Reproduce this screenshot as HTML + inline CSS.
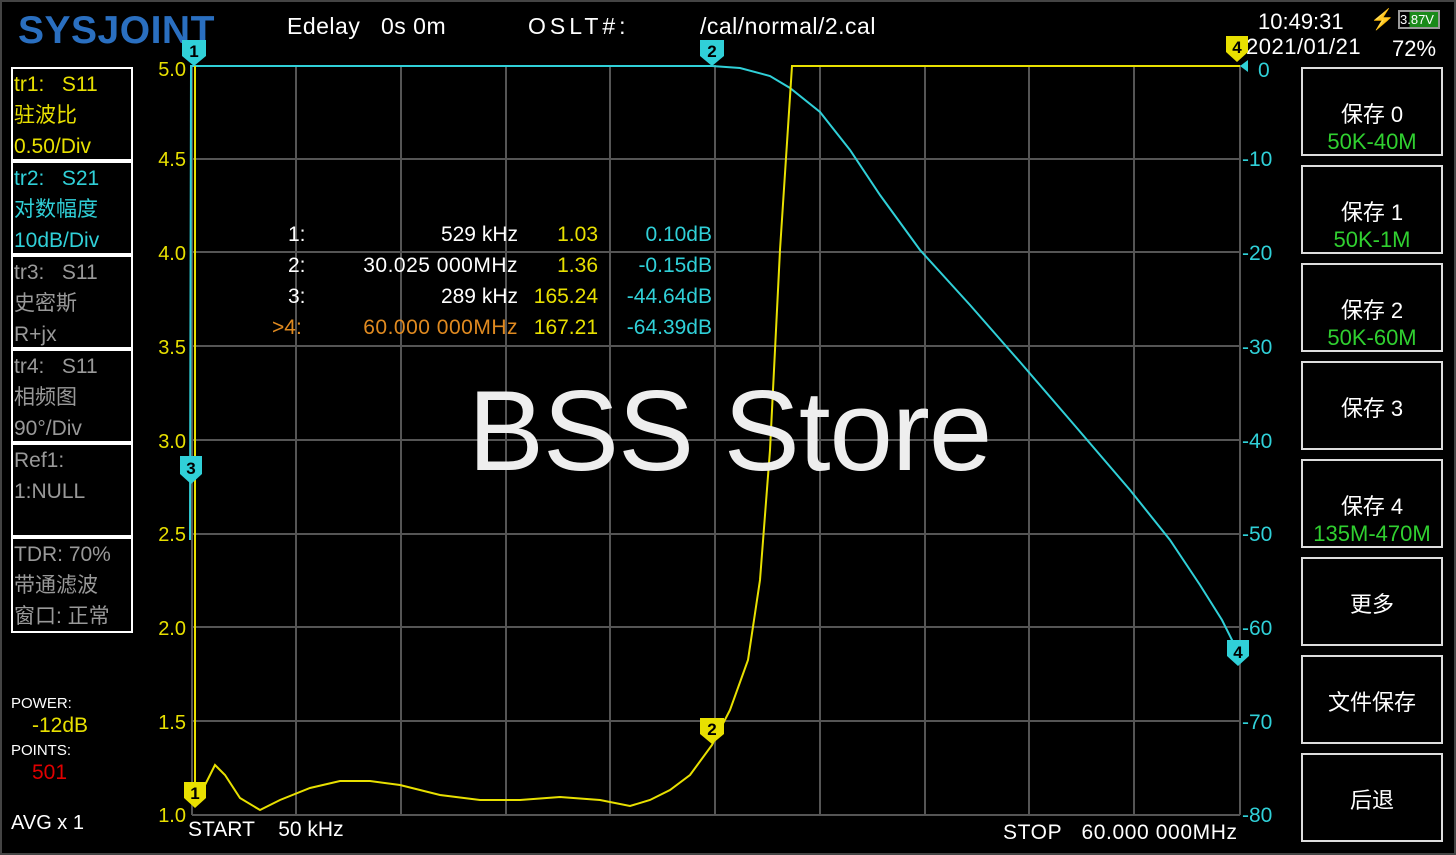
<!DOCTYPE html>
<html><head><meta charset="utf-8"><style>
body{margin:0;width:1456px;height:855px;background:#000;overflow:hidden;position:relative;font-family:"Liberation Sans","Noto Sans CJK SC",sans-serif}
.a{position:absolute;white-space:nowrap}
.box{position:absolute;left:11px;width:122px;border:2px solid #fff;box-sizing:border-box}
.box div{font-size:21px;line-height:31px;padding-left:1px}
.btn{position:absolute;left:1301px;width:142px;height:89px;border:2px solid #ddd;box-sizing:border-box;color:#fff;text-align:center;font-size:22px}
</style></head><body>
<div style="position:absolute;inset:0;border:2px solid #444;box-sizing:border-box"></div>
<div class="a" style="left:18px;top:9px;font-size:39px;font-weight:bold;color:#2a6fc0;letter-spacing:0.5px">SYSJOINT</div>
<div class="a" style="left:287px;top:13px;font-size:23px;color:#fff;letter-spacing:0.5px">Edelay&nbsp;&nbsp;&nbsp;0s 0m</div>
<div class="a" style="left:528px;top:13px;font-size:23px;color:#fff;letter-spacing:4px">OSLT#:</div>
<div class="a" style="left:700px;top:13px;font-size:23px;color:#fff;letter-spacing:0.5px">/cal/normal/2.cal</div>
<div class="a" style="left:1258px;top:9px;font-size:22px;color:#fff">10:49:31</div>
<div class="a" style="left:1370px;top:7px;font-size:20px;color:#f5c000">⚡</div>
<div class="a" style="left:1398px;top:10px;width:42px;height:19px;border:2px solid #999;box-sizing:border-box;font-size:13px;color:#fff;background:linear-gradient(90deg,#000 25%,#1a8a1a 25%)">3.87V</div>
<div class="a" style="left:1246px;top:34px;font-size:22px;color:#fff;letter-spacing:0.5px">2021/01/21</div>
<div class="a" style="left:1392px;top:36px;font-size:22px;color:#fff">72%</div>

<div class="box" style="top:67px;height:94px;color:#e8e000"><div>tr1:&nbsp;&nbsp;&nbsp;S11</div><div>驻波比</div><div>0.50/Div</div></div>
<div class="box" style="top:161px;height:94px;color:#30d0d8"><div>tr2:&nbsp;&nbsp;&nbsp;S21</div><div>对数幅度</div><div>10dB/Div</div></div>
<div class="box" style="top:255px;height:94px;color:#999"><div>tr3:&nbsp;&nbsp;&nbsp;S11</div><div>史密斯</div><div>R+jx</div></div>
<div class="box" style="top:349px;height:94px;color:#999"><div>tr4:&nbsp;&nbsp;&nbsp;S11</div><div>相频图</div><div>90°/Div</div></div>
<div class="box" style="top:443px;height:94px;color:#999"><div>Ref1:</div><div>1:NULL</div></div>
<div class="box" style="top:537px;height:96px;color:#999"><div>TDR: 70%</div><div>带通滤波</div><div>窗口: 正常</div></div>
<div class="a" style="left:11px;top:695px;font-size:15px;color:#fff">POWER:</div>
<div class="a" style="left:32px;top:714px;font-size:21px;color:#e8e000">-12dB</div>
<div class="a" style="left:11px;top:742px;font-size:15px;color:#fff">POINTS:</div>
<div class="a" style="left:32px;top:761px;font-size:21px;color:#e00000">501</div>
<div class="a" style="left:11px;top:812px;font-size:20px;color:#fff">AVG x 1</div>

<svg class="a" style="left:0;top:0" width="1456" height="855">
<g stroke="#555" stroke-width="2">
<path d="M296 65V815M401 65V815M506 65V815M610 65V815M715 65V815M820 65V815M925 65V815M1029 65V815M1134 65V815M1240 65V815M192 65V815"/>
<path d="M192 159H1240M192 252H1240M192 346H1240M192 440H1240M192 534H1240M192 627H1240M192 721H1240M192 815H1240"/>
</g>
<g fill="#e8e000" font-size="20" text-anchor="end" font-family="Liberation Sans">
<text x="186" y="76">5.0</text><text x="186" y="166">4.5</text><text x="186" y="260">4.0</text><text x="186" y="354">3.5</text><text x="186" y="448">3.0</text><text x="186" y="541">2.5</text><text x="186" y="635">2.0</text><text x="186" y="729">1.5</text><text x="186" y="822">1.0</text>
</g>
<g fill="#30d0d8" font-size="21" font-family="Liberation Sans">
<text x="1258" y="77">0</text><text x="1242" y="166">-10</text><text x="1242" y="260">-20</text><text x="1242" y="354">-30</text><text x="1242" y="448">-40</text><text x="1242" y="541">-50</text><text x="1242" y="635">-60</text><text x="1242" y="729">-70</text><text x="1242" y="822">-80</text>
</g>
<path d="M190 540L191 66H712L740 68L770 76L790 88L820 112L850 150L880 195L920 250L970 305L1020 362L1070 420L1130 490L1170 540L1200 585L1222 620L1237 650" fill="none" stroke="#30d0d8" stroke-width="2"/>
<path d="M195 795L195 66M195 795L205 785L215 765L225 775L240 798L260 810L280 800L310 788L340 781L370 781L400 785L440 795L480 800L520 800L560 797L600 800L630 806L650 800L670 790L690 775L712 745L730 710L748 660L760 580L770 450L780 250L792 66H1240" fill="none" stroke="#e8e000" stroke-width="2"/>
<path d="M182 40h24v16l-12 10l-12-10z" fill="#30d0d8"/><text x="194" y="57" font-size="17" font-weight="bold" text-anchor="middle">1</text>
<path d="M700 40h24v16l-12 10l-12-10z" fill="#30d0d8"/><text x="712" y="57" font-size="17" font-weight="bold" text-anchor="middle">2</text>
<path d="M180 456h22v18l-11 10l-11-10z" fill="#30d0d8"/><text x="191" y="474" font-size="17" font-weight="bold" text-anchor="middle">3</text>
<path d="M1227 640h22v16l-11 10l-11-10z" fill="#30d0d8"/><text x="1238" y="658" font-size="17" font-weight="bold" text-anchor="middle">4</text>
<path d="M1226 36h22v16l-11 10l-11-10z" fill="#e8e000"/><text x="1237" y="53" font-size="17" font-weight="bold" text-anchor="middle">4</text>
<path d="M700 718h24v16l-12 10l-12-10z" fill="#e8e000"/><text x="712" y="735" font-size="17" font-weight="bold" text-anchor="middle">2</text>
<path d="M184 782h22v16l-11 10l-11-10z" fill="#e8e000"/><text x="195" y="799" font-size="17" font-weight="bold" text-anchor="middle">1</text>
<path d="M1248 60l-8 6l8 6z" fill="#30d0d8"/>
</svg>

<div class="a" style="left:288px;top:223px;font-size:21px;color:#fff">1:</div>
<div class="a" style="left:288px;top:254px;font-size:21px;color:#fff">2:</div>
<div class="a" style="left:288px;top:285px;font-size:21px;color:#fff">3:</div>
<div class="a" style="left:272px;top:316px;font-size:21px;color:#e08a20">&gt;4:</div>
<div class="a" style="right:938px;top:223px;font-size:21px;color:#fff">529 kHz</div>
<div class="a" style="right:938px;top:254px;font-size:21px;color:#fff;letter-spacing:0.5px">30.025 000MHz</div>
<div class="a" style="right:938px;top:285px;font-size:21px;color:#fff">289 kHz</div>
<div class="a" style="right:938px;top:316px;font-size:21px;color:#e08a20;letter-spacing:0.5px">60.000 000MHz</div>
<div class="a" style="right:858px;top:223px;font-size:21px;color:#e8e000">1.03</div>
<div class="a" style="right:858px;top:254px;font-size:21px;color:#e8e000">1.36</div>
<div class="a" style="right:858px;top:285px;font-size:21px;color:#e8e000">165.24</div>
<div class="a" style="right:858px;top:316px;font-size:21px;color:#e8e000">167.21</div>
<div class="a" style="right:744px;top:223px;font-size:21px;color:#30d0d8">0.10dB</div>
<div class="a" style="right:744px;top:254px;font-size:21px;color:#30d0d8">-0.15dB</div>
<div class="a" style="right:744px;top:285px;font-size:21px;color:#30d0d8">-44.64dB</div>
<div class="a" style="right:744px;top:316px;font-size:21px;color:#30d0d8">-64.39dB</div>

<div class="a" style="left:468px;top:366px;font-size:114px;color:#eee;letter-spacing:-1px">BSS Store</div>

<div class="a" style="left:188px;top:818px;font-size:21px;color:#fff">START&nbsp;&nbsp;&nbsp;&nbsp;50 kHz</div>
<div class="a" style="left:1003px;top:821px;font-size:21px;color:#fff;letter-spacing:0.6px">STOP&nbsp;&nbsp;&nbsp;60.000 000MHz</div>

<div class="btn" style="top:67px"><div style="margin-top:28px">保存 0</div><div style="color:#30d030">50K-40M</div></div>
<div class="btn" style="top:165px"><div style="margin-top:28px">保存 1</div><div style="color:#30d030">50K-1M</div></div>
<div class="btn" style="top:263px"><div style="margin-top:28px">保存 2</div><div style="color:#30d030">50K-60M</div></div>
<div class="btn" style="top:361px"><div style="margin-top:28px">保存 3</div></div>
<div class="btn" style="top:459px"><div style="margin-top:28px">保存 4</div><div style="color:#30d030">135M-470M</div></div>
<div class="btn" style="top:557px"><div style="margin-top:28px">更多</div></div>
<div class="btn" style="top:655px"><div style="margin-top:28px">文件保存</div></div>
<div class="btn" style="top:753px"><div style="margin-top:28px">后退</div></div>
</body></html>
